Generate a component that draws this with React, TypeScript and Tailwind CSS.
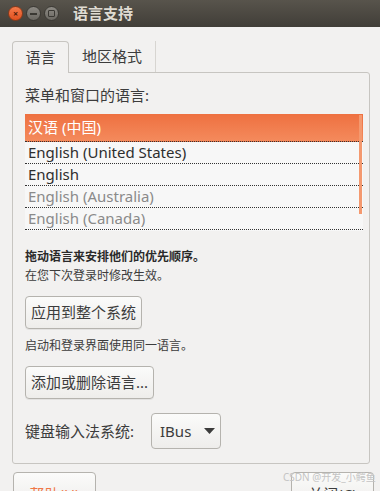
import React from "react";

const F = { fontFamily: '"Noto Sans", "Noto Sans CJK SC", sans-serif' };

function Row({ children, cls, h = "h-[22px]" }: { children: React.ReactNode; cls: string; h?: string }) {
  return (
    <div className={`${h} flex items-center pl-[3px] border-b border-dotted border-[#333] text-[15px] leading-none ${cls}`}>
      {children}
    </div>
  );
}

export default function App() {
  return (
    <div className="w-[380px] h-[491px] bg-[#f2f1f0] overflow-hidden relative" style={F}>
      {/* title bar */}
      <div className="h-[27px] bg-gradient-to-b from-[#58544c] to-[#413e38] flex items-center pl-[8px]">
        <div className="w-[15px] h-[15px] rounded-full bg-gradient-to-b from-[#f47a4a] to-[#e0501d] border border-[#8a3a1a] flex items-center justify-center text-[#4a1a08] text-[9px] leading-none font-bold">×</div>
        <div className="ml-[3px] w-[15px] h-[15px] rounded-full bg-gradient-to-b from-[#8d8a84] to-[#6b6862] border border-[#3b3934] flex items-center justify-center">
          <div className="w-[7px] h-[2px] bg-[#3a3833]" />
        </div>
        <div className="ml-[3px] w-[15px] h-[15px] rounded-full bg-gradient-to-b from-[#8d8a84] to-[#6b6862] border border-[#3b3934] flex items-center justify-center">
          <div className="w-[7px] h-[7px] border-[1.5px] border-[#3a3833] rounded-[1px]" />
        </div>
        <div className="ml-[14px] text-[#dfdbd2] text-[15px] font-bold leading-none">语言支持</div>
      </div>

      <div className="pl-[12px] pr-[10px] pt-[13px]">
        {/* tabs */}
        <div className="flex items-end h-[32px]">
          <div className="w-[57px] h-[32px] border border-b-0 border-[#c7c5c1] rounded-t-[4px] bg-[#f2f1f0] flex items-center justify-center text-[15px] text-[#3c3c3c] relative z-10 -mb-px">
            语言
          </div>
          <div className="w-[87px] h-[31px] border-r border-[#d7d5d1] flex items-center justify-center text-[15px] text-[#3c3c3c]">
            地区格式
          </div>
        </div>
        {/* frame */}
        <div className="h-[392px] border border-[#c7c5c1] rounded-b-[3px] rounded-tr-[3px] pl-[12px] pr-[6px] flex flex-col">
          <div className="mt-[15px] text-[15px] text-[#3c3c3c] leading-none h-[14px] flex items-center">菜单和窗口的语言:</div>
          <div className="mt-[12px] relative h-[117px] bg-[#f7f7f7] w-[338px]">
            <Row cls="text-white bg-gradient-to-b from-[#ee7040] to-[#f48a5c] border-[#333]" h="h-[28px]">汉语 (中国)</Row>
            <Row cls="text-[#2e2e2e]">English (United States)</Row>
            <Row cls="text-[#2e2e2e]">English</Row>
            <Row cls="text-[#8a8a8a]">English (Australia)</Row>
            <Row cls="text-[#8a8a8a]">English (Canada)</Row>
            <div className="absolute right-[1px] top-[1px] w-[3px] h-[99px] bg-[#f4996f]" />
          </div>
          <div className="mt-[20px] text-[12px] font-bold text-[#2a2a2a] leading-none">拖动语言来安排他们的优先顺序。</div>
          <div className="mt-[7px] text-[12px] text-[#3c3c3c] leading-none">在您下次登录时修改生效。</div>
          <div className="mt-[14px] w-[117px] h-[33px] border border-[#b5b3ae] rounded-[4px] bg-gradient-to-b from-[#fbfbfa] to-[#eeedeb] flex items-center justify-center text-[15px] text-[#3c3c3c] shadow-[0_1px_0_rgba(0,0,0,0.06)]">
            应用到整个系统
          </div>
          <div className="mt-[11px] text-[12px] text-[#3c3c3c] leading-none">启动和登录界面使用同一语言。</div>
          <div className="mt-[14px] w-[129px] h-[33px] border border-[#b5b3ae] rounded-[4px] bg-gradient-to-b from-[#fbfbfa] to-[#eeedeb] flex items-center justify-center text-[15px] text-[#3c3c3c] shadow-[0_1px_0_rgba(0,0,0,0.06)]">
            添加或删除语言...
          </div>
          <div className="mt-[14px] flex items-center">
            <div className="text-[15px] text-[#3c3c3c] leading-none">键盘输入法系统:</div>
            <div className="ml-[17px] w-[70px] h-[36px] border border-[#b5b3ae] rounded-[4px] bg-gradient-to-b from-[#fbfbfa] to-[#eeedeb] flex items-center pl-[8px] text-[15px] text-[#3c3c3c]">
              IBus
              <svg width="11" height="6" viewBox="0 0 11 6" className="ml-[13px]">
                <path d="M0 0 L11 0 L5.5 6 Z" fill="#3c3c3c" />
              </svg>
            </div>
          </div>
        </div>
      </div>

      {/* bottom buttons */}
      <div className="flex justify-between pl-[13px] pr-[6px] mt-[8px]">
        <div className="w-[83px] h-[36px] border border-[#b5b3ae] rounded-[4px] bg-gradient-to-b from-[#fbfbfa] to-[#eeedeb] flex justify-center pt-[10px] text-[15px] text-[#f07746]">帮助(H)</div>
        <div className="w-[83px] h-[36px] border border-[#b5b3ae] rounded-[4px] bg-gradient-to-b from-[#fbfbfa] to-[#eeedeb] flex justify-center pt-[10px] text-[15px] text-[#3c3c3c]">关闭(C)</div>
      </div>
      <div className="absolute left-[283px] top-[472px] text-[10px] text-[#c4c4c4] leading-none">CSDN @开发_小鳄鱼</div>
    </div>
  );
}
